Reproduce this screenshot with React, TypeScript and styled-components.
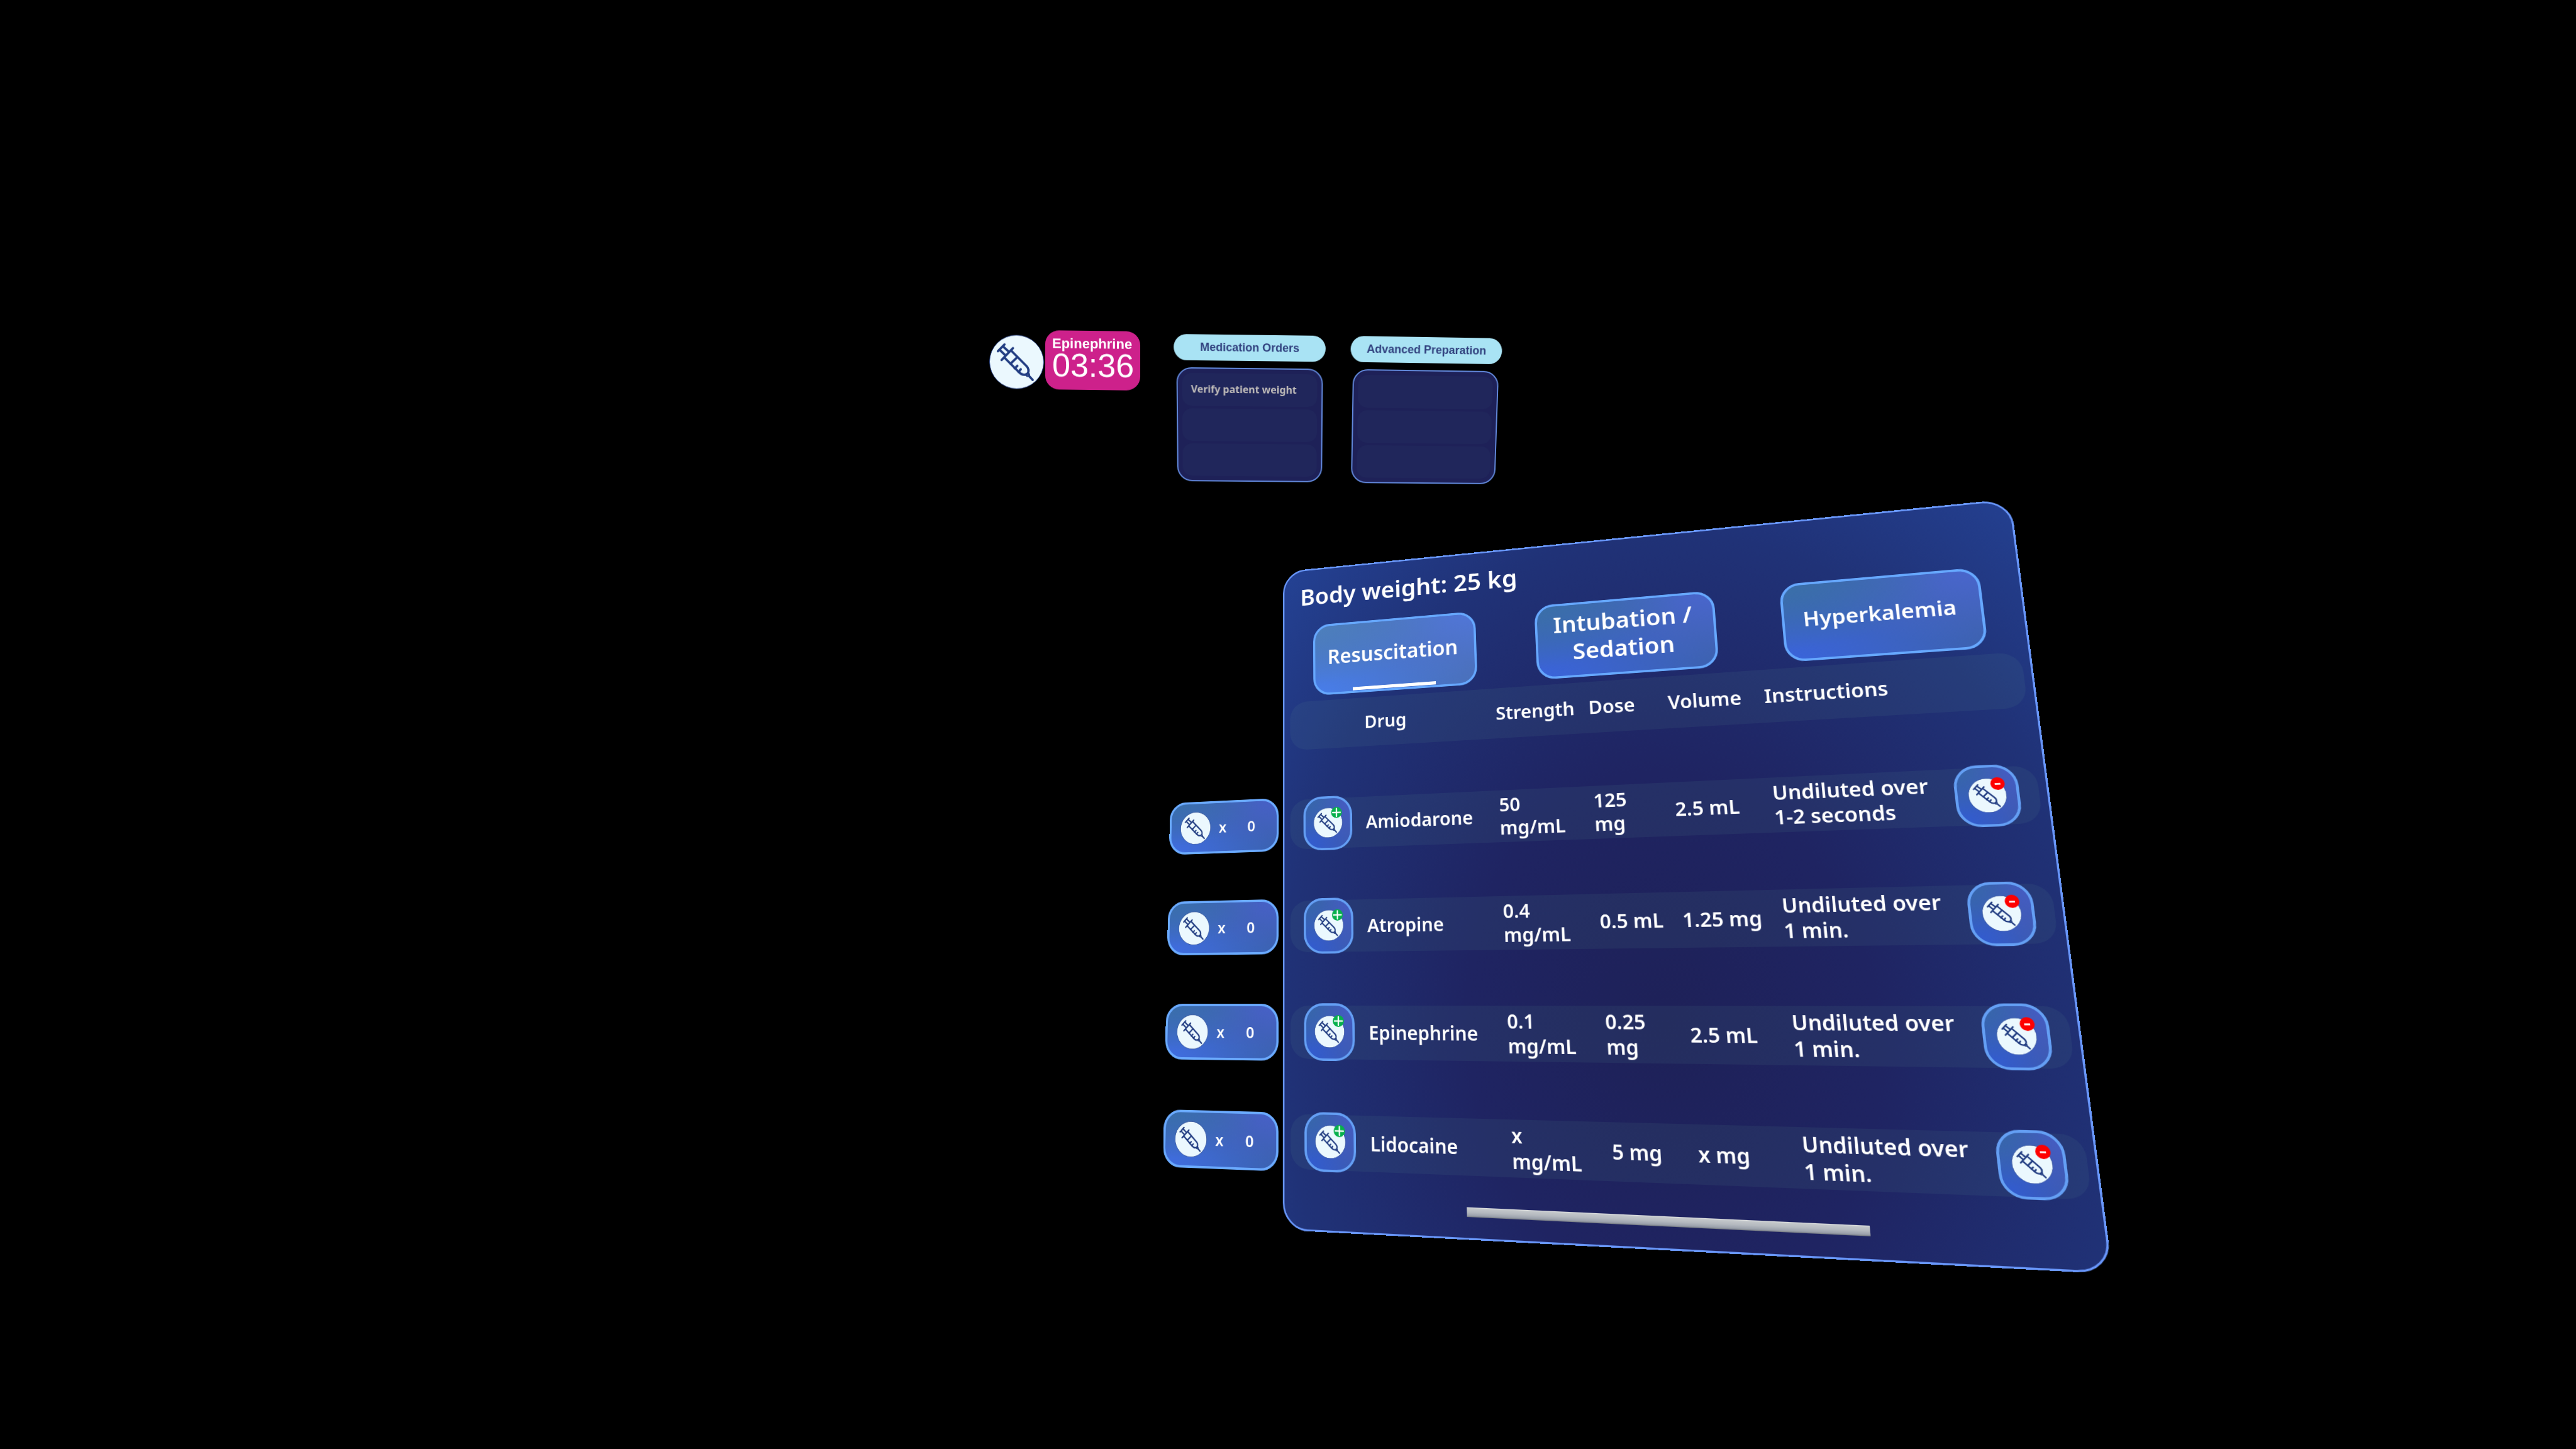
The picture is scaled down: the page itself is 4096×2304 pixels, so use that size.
import React, { useEffect, useState } from "react";
import styled, { createGlobalStyle } from "styled-components";

/* ---------- Perspective helpers ---------- */

type Point = [number, number];
type Quad = [Point, Point, Point, Point]; // top left, top right, bottom right, bottom left

const SCENE_WIDTH = 4096;

/** Builds the matrix3d that lays a flat width x height surface onto four corners. */
function project(width: number, height: number, quad: Quad, scale: number): string {
  const [[x0, y0], [x1, y1], [x2, y2], [x3, y3]] = quad.map(([x, y]) => [x * scale, y * scale]);
  const dx1 = x1 - x2;
  const dx2 = x3 - x2;
  const dy1 = y1 - y2;
  const dy2 = y3 - y2;
  const sx = x0 - x1 + x2 - x3;
  const sy = y0 - y1 + y2 - y3;
  const det = dx1 * dy2 - dx2 * dy1;
  const g = (sx * dy2 - dx2 * sy) / det;
  const h = (dx1 * sy - sx * dy1) / det;
  const a = x1 - x0 + g * x1;
  const b = x3 - x0 + h * x3;
  const d = y1 - y0 + g * y1;
  const e = y3 - y0 + h * y3;
  const m = [
    a / width, d / width, 0, g / width,
    b / height, e / height, 0, h / height,
    0, 0, 1, 0,
    x0, y0, 0, 1,
  ];
  return `matrix3d(${m.map((n) => n.toFixed(12)).join(",")})`;
}

function useSceneScale(): number {
  const [scale, setScale] = useState(() => window.innerWidth / SCENE_WIDTH);
  useEffect(() => {
    const update = () => setScale(window.innerWidth / SCENE_WIDTH);
    window.addEventListener("resize", update);
    return () => window.removeEventListener("resize", update);
  }, []);
  return scale;
}

/* ---------- Data ---------- */

const TABS = [
  { label: "Resuscitation", size: 37 },
  { label: "Intubation / Sedation", size: 40 },
  { label: "Hyperkalemia", size: 34 },
];

const DRUGS = [
  { name: "Amiodarone", strength: "50 mg/mL", dose: "125 mg", volume: "2.5 mL", note: "Undiluted over 1-2 seconds" },
  { name: "Atropine", strength: "0.4 mg/mL", dose: "0.5 mL", volume: "1.25 mg", note: "Undiluted over 1 min." },
  { name: "Epinephrine", strength: "0.1 mg/mL", dose: "0.25 mg", volume: "2.5 mL", note: "Undiluted over 1 min." },
  { name: "Lidocaine", strength: "x mg/mL", dose: "5 mg", volume: "x mg", note: "Undiluted over 1 min." },
];

const TIMER_QUAD: Quad = [[1573, 524], [1813, 527], [1813, 621], [1573, 618]];
const ORDERS_QUAD: Quad = [[1866, 531], [2108, 534], [2106, 767], [1868, 765]];
const PREP_QUAD: Quad = [[2148, 534], [2389, 538], [2381, 770], [2144, 768]];
const PANEL_QUAD: Quad = [[2040, 909], [3197, 793], [3360, 2025], [2040, 1955]];

const PANEL_WIDTH = 1240;
const PANEL_HEIGHT = 1172;
const RAIL_WIDTH = 222;

/* ---------- Styles ---------- */

const GlobalStyle = createGlobalStyle`
  body { margin: 0; background: #000; }
  *, *::before, *::after { box-sizing: border-box; }
  button { font: inherit; color: inherit; margin: 0; padding: 0; cursor: pointer; }
`;

const Scene = styled.main`
  position: relative;
  min-height: 100vh;
  overflow: hidden;
  background: #000;
  color: #fff;
  font-family: "Noto Sans", "Open Sans", sans-serif;
  font-weight: 600;
`;

const Surface = styled.section`
  position: absolute;
  left: 0;
  top: 0;
  transform-origin: 0 0;
`;

const TimerRow = styled.div`
  display: flex;
  align-items: flex-end;
  gap: 2px;
  width: 240px;
`;

const TimerCard = styled.div`
  flex: 1;
  min-width: 0;
  height: 95px;
  padding: 9px 0 0 11px;
  border-radius: 22px;
  background: #cd218b;
  font-family: "Liberation Sans", Arial, sans-serif;
  white-space: nowrap;
`;

const TimerName = styled.div`
  font-size: 22px;
  line-height: 24px;
  font-weight: 700;
`;

const TimerValue = styled.div`
  font-size: 52px;
  line-height: 46px;
  font-weight: 400;
`;

const SyringeDisc = styled.svg<{ $size: number }>`
  display: block;
  flex: none;
  width: ${(p) => p.$size}px;
  height: ${(p) => p.$size}px;
`;

const Board = styled.div`
  display: flex;
  flex-direction: column;
  gap: 11px;
  width: 242px;
`;

const BoardTitle = styled.h2`
  margin: 0;
  border-radius: 21px;
  background: #a9e3f4;
  color: #30407e;
  font: 700 18px/41px "Liberation Sans", Arial, sans-serif;
  text-align: center;
`;

const BoardList = styled.ul`
  display: flex;
  flex-direction: column;
  gap: 4px;
  margin: 0 4px;
  padding: 7px;
  border: 2px solid #6187d9;
  border-radius: 24px;
  background: #1e2158;
  list-style: none;
`;

const BoardSlot = styled.li`
  height: 52px;
  padding-left: 14px;
  border-radius: 15px;
  background: #20265b;
  color: #c1bdba;
  font-size: 16px;
  font-weight: 700;
  line-height: 50px;
`;

const Workspace = styled.div`
  display: flex;
  align-items: flex-start;
  gap: 8px;
`;

const Rail = styled.div`
  display: flex;
  flex-direction: column;
  gap: 86px;
  width: 214px;
  padding-top: 433px;
`;

const glass = (tl: string, tr: string, bl: string, br: string) => `
  background:
    radial-gradient(ellipse at 0 0, ${tl} 0%, transparent 60%),
    radial-gradient(ellipse at 100% 0, ${tr} 0%, transparent 65%),
    radial-gradient(ellipse at 0 100%, ${bl} 0%, transparent 70%),
    ${br};
  background-origin: border-box;
`;

const Counter = styled.output`
  display: flex;
  align-items: center;
  gap: 16px;
  height: 97px;
  padding-left: 18px;
  border: 4px solid #6aaaff;
  border-radius: 32px;
  ${glass("#3a70ac", "#4860c8", "#406ee4", "#3b62b0")}
  font-size: 27px;
  line-height: 40px;
`;

const CounterValue = styled.span`
  width: 64px;
  text-align: center;
`;

const Panel = styled.div`
  flex: none;
  width: ${PANEL_WIDTH}px;
  padding: 21px 11px 32px;
  border: 3px solid #6896fa;
  border-radius: 44px;
  background: radial-gradient(ellipse at 52% 71%, #1e2158 0%, #1f2462 35%, #203277 71%, #244294 100%);
  background-origin: border-box;
`;

const Title = styled.h1`
  margin: 0 0 27px;
  padding-left: 20px;
  font-size: 44px;
  line-height: 60px;
  font-weight: 600;
`;

const Tabs = styled.nav`
  display: flex;
  justify-content: space-between;
  padding: 0 45px;
`;

const Tab = styled.button<{ $active: boolean; $size: number }>`
  position: relative;
  width: 304px;
  height: 135px;
  padding: 0 28px 10px 22px;
  border: 4px solid #66a8ff;
  border-radius: 32px;
  ${(p) =>
    p.$active
      ? glass("#4d80bc", "#5176d8", "#487eec", "#4a70ba")
      : glass("#3a70a8", "#4a66ce", "#3a64dc", "#3d62b0")}
  font-size: ${(p) => p.$size}px;
  line-height: 50px;
  font-weight: 600;

  &::after {
    content: "";
    display: ${(p) => (p.$active ? "block" : "none")};
    position: absolute;
    left: 24%;
    right: 24%;
    bottom: 1px;
    height: 6px;
    background: #fff;
  }
`;

const Table = styled.table`
  display: flex;
  flex-direction: column;
  gap: 92px;
  margin-top: 10px;
  text-align: left;
  font-size: 32px;
  line-height: 40px;
`;

const Group = styled.thead`
  display: block;
`;

const Body = styled.tbody`
  display: flex;
  flex-direction: column;
  gap: 92px;
`;

const Row = styled.tr`
  display: grid;
  grid-template-columns: 116px 238px 160px 132px 154px 1fr 91px;
  align-items: center;
  height: 90px;
  padding: 0 27px 0 25px;
  border-radius: 32px;
  background: rgba(90, 150, 150, 0.11);
`;

const HeadCell = styled.th`
  padding: 0;
  font-weight: 600;
`;

const Cell = styled.td`
  padding: 0 26px 0 0;
`;

const NameCell = styled.th`
  padding: 0;
  font-weight: 600;
`;

const ActionCell = styled.td`
  display: flex;
  align-items: center;
  height: 90px;
  padding: 0 0 2px;
`;

const IconButton = styled.button`
  display: flex;
  flex: none;
  align-items: center;
  justify-content: center;
  width: 91px;
  height: 97px;
  border: 4px solid #649ff4;
  border-radius: 34px;
  ${glass("#3668a8", "#465cc4", "#305cd4", "#3d5bb2")}
`;

const IconStack = styled.span`
  position: relative;
  display: block;
`;

const Badge = styled.svg`
  position: absolute;
  right: 1px;
  top: -1px;
  width: 20px;
  height: 20px;
`;

const Scrollbar = styled.div`
  width: 609px;
  height: 15px;
  margin: 49px auto 0;
  background: linear-gradient(#e4e6e6 0%, #c3c7ca 12%, #b4b9bf 50%, #9aa0ab 85%, #757a80 100%);
`;

/* ---------- Pieces ---------- */

function Syringe({ size }: { size: number }) {
  return (
    <SyringeDisc $size={size} viewBox="0 0 500 500" aria-hidden="true">
      <circle cx="250" cy="250" r="247" fill="#ebf8fe" stroke="#2a4690" strokeWidth="5" />
      <g fill="none" stroke="#223d82" strokeWidth="21" strokeLinecap="round" strokeLinejoin="round">
        <path d="M79 153 139 90" />
        <path d="M129 112 179 157M97 142 144 187" />
        <path d="M112 234 217 123" />
        <path d="M204 150 340 286C361 308 364 330 352 356" />
        <path d="M141 214 272 345C294 368 316 374 342 362" />
        <path d="M257 205 194 267" />
        <path d="M257 286 232 310M288 317 267 342" />
        <circle cx="352" cy="367" r="13" strokeWidth="16" />
        <path d="M367 382 397 414" />
      </g>
    </SyringeDisc>
  );
}

function DoseButton({ kind, drug, onClick }: { kind: "add" | "remove"; drug: string; onClick: () => void }) {
  const add = kind === "add";
  return (
    <IconButton type="button" onClick={onClick} aria-label={`${add ? "Add" : "Remove"} ${drug} dose`}>
      <IconStack>
        <Syringe size={54} />
        <Badge viewBox="0 0 20 20" aria-hidden="true">
          <circle cx="10" cy="10" r="10" fill={add ? "#07b04c" : "#fe0000"} />
          <path
            d={add ? "M10 3V17M3 10H17" : "M6 10.5H14"}
            stroke="#fff"
            strokeWidth={add ? 2.4 : 2.6}
            strokeLinecap={add ? "round" : "butt"}
          />
        </Badge>
      </IconStack>
    </IconButton>
  );
}

export default function App() {
  const scale = useSceneScale();
  const [active, setActive] = useState(0);
  const [counts, setCounts] = useState<number[]>(DRUGS.map(() => 0));

  const change = (index: number, step: number) =>
    setCounts((all) => all.map((n, i) => (i === index ? Math.max(0, n + step) : n)));

  return (
    <Scene>
      <GlobalStyle />

      <Surface style={{ transform: project(240, 95, TIMER_QUAD, scale) }}>
        <TimerRow>
          <Syringe size={87} />
          <TimerCard>
            <TimerName>Epinephrine</TimerName>
            <TimerValue>03:36</TimerValue>
          </TimerCard>
        </TimerRow>
      </Surface>

      <Surface style={{ transform: project(242, 234, ORDERS_QUAD, scale) }}>
        <Board>
          <BoardTitle>Medication Orders</BoardTitle>
          <BoardList>
            <BoardSlot>Verify patient weight</BoardSlot>
            <BoardSlot />
            <BoardSlot />
          </BoardList>
        </Board>
      </Surface>

      <Surface style={{ transform: project(242, 234, PREP_QUAD, scale) }}>
        <Board>
          <BoardTitle>Advanced Preparation</BoardTitle>
          <BoardList>
            <BoardSlot />
            <BoardSlot />
            <BoardSlot />
          </BoardList>
        </Board>
      </Surface>

      <Surface
        style={{
          transform: `${project(PANEL_WIDTH, PANEL_HEIGHT, PANEL_QUAD, scale)} translateX(-${RAIL_WIDTH}px)`,
        }}
      >
        <Workspace>
          <Rail>
            {DRUGS.map((drug, i) => (
              <Counter key={drug.name} aria-label={`${drug.name} doses`}>
                <Syringe size={60} />
                <span>x</span>
                <CounterValue>{counts[i]}</CounterValue>
              </Counter>
            ))}
          </Rail>

          <Panel>
            <Title>Body weight: 25 kg</Title>
            <Tabs>
              {TABS.map((tab, i) => (
                <Tab
                  key={tab.label}
                  type="button"
                  $active={i === active}
                  $size={tab.size}
                  onClick={() => setActive(i)}
                >
                  {tab.label}
                </Tab>
              ))}
            </Tabs>
            <Table>
              <Group>
                <Row>
                  <HeadCell />
                  <HeadCell scope="col">Drug</HeadCell>
                  <HeadCell scope="col">Strength</HeadCell>
                  <HeadCell scope="col">Dose</HeadCell>
                  <HeadCell scope="col">Volume</HeadCell>
                  <HeadCell scope="col">Instructions</HeadCell>
                  <HeadCell />
                </Row>
              </Group>
              <Body>
                {DRUGS.map((drug, i) => (
                  <Row key={drug.name}>
                    <ActionCell>
                      <DoseButton kind="add" drug={drug.name} onClick={() => change(i, 1)} />
                    </ActionCell>
                    <NameCell scope="row">{drug.name}</NameCell>
                    <Cell>{drug.strength}</Cell>
                    <Cell>{drug.dose}</Cell>
                    <Cell>{drug.volume}</Cell>
                    <Cell>{drug.note}</Cell>
                    <ActionCell>
                      <DoseButton kind="remove" drug={drug.name} onClick={() => change(i, -1)} />
                    </ActionCell>
                  </Row>
                ))}
              </Body>
            </Table>
            <Scrollbar />
          </Panel>
        </Workspace>
      </Surface>
    </Scene>
  );
}
